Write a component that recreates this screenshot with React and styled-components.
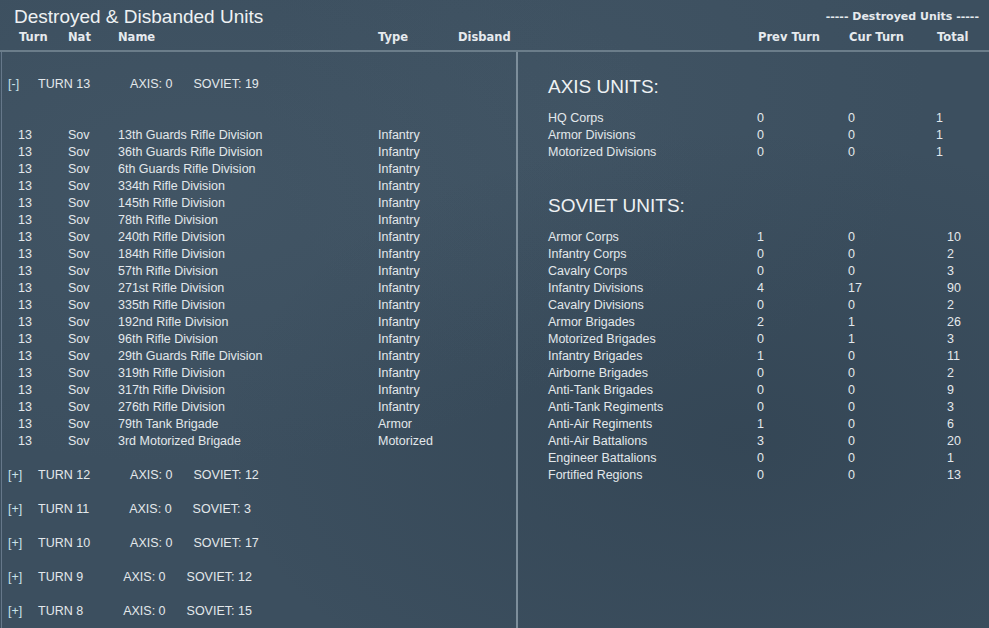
import React from "react";
import styled, { createGlobalStyle } from "styled-components";

const GlobalStyle = createGlobalStyle`
  html, body {
    margin: 0;
    padding: 0;
    background: #3c4f5f;
    overflow: hidden;
  }
  * { box-sizing: border-box; }
`;

const Page = styled.div`
  width: 989px;
  height: 628px;
  overflow: hidden;
  color: #e3e8eb;
  font-family: "Liberation Sans", Arial, sans-serif;
  background:
    radial-gradient(ellipse at 20% 30%, rgba(90, 110, 125, 0.18), transparent 45%),
    radial-gradient(ellipse at 75% 70%, rgba(30, 45, 58, 0.25), transparent 50%),
    radial-gradient(ellipse at 60% 15%, rgba(85, 105, 120, 0.15), transparent 40%),
    #3c4f5f;
`;

const Header = styled.header`
  display: flex;
  height: 52px;
  border-bottom: 2px solid #6b7d8a;
`;

const HeadLeft = styled.div`
  width: 518px;
  padding-top: 6px;
`;

const HeadRight = styled.div`
  flex: 1;
  padding-top: 10px;
`;

const Title = styled.h1`
  margin: 0 0 0 14px;
  font-size: 19px;
  font-weight: normal;
  line-height: 22px;
  color: #eef1f3;
`;

const ColHeads = styled.div`
  display: grid;
  grid-template-columns: ${(p) => p.cols};
  padding-left: ${(p) => p.indent}px;
  margin-top: ${(p) => p.gap}px;
  font-family: "DejaVu Sans", Verdana, sans-serif;
  font-weight: bold;
  font-size: 11.5px;
  line-height: 14px;
  color: #e6eaee;
  white-space: nowrap;
`;

const Caption = styled.div`
  text-align: right;
  padding-right: 10px;
  font-family: "DejaVu Sans", Verdana, sans-serif;
  font-weight: bold;
  font-size: 11px;
  line-height: 14px;
  color: #e6eaee;
  white-space: pre;
`;

const Body = styled.div`
  display: flex;
  height: 576px;
`;

const LeftPanel = styled.section`
  width: 517px;
  margin-left: 1px;
  border-left: 1px solid #66788a;
  border-right: 2px solid #7d8e9b;
  padding-top: 15px;
`;

const RightPanel = styled.section`
  flex: 1;
  padding: 20px 0 0 30px;
`;

const TurnHeader = styled.div`
  display: flex;
  height: 34px;
  line-height: 34px;
  font-size: 12.5px;
  white-space: nowrap;
`;

const Toggle = styled.span`
  width: 36px;
  padding-left: 6px;
  color: #c9e3ea;
`;

const TurnLabel = styled.span`
  margin-right: 40px;
`;

const Count = styled.span`
  margin-right: 21px;
`;

const UnitList = styled.div`
  margin: 26px 0 8px;
`;

const UnitRow = styled.div`
  display: grid;
  grid-template-columns: 50px 50px 260px 1fr;
  padding-left: 16px;
  height: 17px;
  line-height: 17px;
  font-size: 12.5px;
  white-space: nowrap;
`;

const SectionTitle = styled.h2`
  margin: ${(p) => (p.first ? "0" : "30px")} 0 8px 0;
  height: 30px;
  line-height: 30px;
  font-size: 19px;
  font-weight: normal;
  color: #eef1f3;
`;

const StatRow = styled.div`
  display: grid;
  grid-template-columns: 209px 91px ${(p) => 88 + p.shift}px 1fr;
  height: 17px;
  line-height: 17px;
  font-size: 12.5px;
  white-space: nowrap;
`;

const turns = [
  { n: 12, soviet: 12 },
  { n: 11, soviet: 3 },
  { n: 10, soviet: 17 },
  { n: 9, soviet: 12 },
  { n: 8, soviet: 15 },
];

const units = [
  ["13th Guards Rifle Division", "Infantry"],
  ["36th Guards Rifle Division", "Infantry"],
  ["6th Guards Rifle Division", "Infantry"],
  ["334th Rifle Division", "Infantry"],
  ["145th Rifle Division", "Infantry"],
  ["78th Rifle Division", "Infantry"],
  ["240th Rifle Division", "Infantry"],
  ["184th Rifle Division", "Infantry"],
  ["57th Rifle Division", "Infantry"],
  ["271st Rifle Division", "Infantry"],
  ["335th Rifle Division", "Infantry"],
  ["192nd Rifle Division", "Infantry"],
  ["96th Rifle Division", "Infantry"],
  ["29th Guards Rifle Division", "Infantry"],
  ["319th Rifle Division", "Infantry"],
  ["317th Rifle Division", "Infantry"],
  ["276th Rifle Division", "Infantry"],
  ["79th Tank Brigade", "Armor"],
  ["3rd Motorized Brigade", "Motorized"],
];

const axisStats = [
  ["HQ Corps", 0, 0, 1],
  ["Armor Divisions", 0, 0, 1],
  ["Motorized Divisions", 0, 0, 1],
];

const sovietStats = [
  ["Armor Corps", 1, 0, 10],
  ["Infantry Corps", 0, 0, 2],
  ["Cavalry Corps", 0, 0, 3],
  ["Infantry Divisions", 4, 17, 90],
  ["Cavalry Divisions", 0, 0, 2],
  ["Armor Brigades", 2, 1, 26],
  ["Motorized Brigades", 0, 1, 3],
  ["Infantry Brigades", 1, 0, 11],
  ["Airborne Brigades", 0, 0, 2],
  ["Anti-Tank Brigades", 0, 0, 9],
  ["Anti-Tank Regiments", 0, 0, 3],
  ["Anti-Air Regiments", 1, 0, 6],
  ["Anti-Air Battalions", 3, 0, 20],
  ["Engineer Battalions", 0, 0, 1],
  ["Fortified Regions", 0, 0, 13],
];

const Turn = ({ open, n, axis, soviet }) => (
  <TurnHeader>
    <Toggle>{open ? "[-]" : "[+]"}</Toggle>
    <TurnLabel>TURN {n}</TurnLabel>
    <Count>AXIS: {axis}</Count>
    <Count>SOVIET: {soviet}</Count>
  </TurnHeader>
);

const Stats = ({ rows, shift }) =>
  rows.map(([label, prev, cur, total]) => (
    <StatRow key={label} shift={shift}>
      <span>{label}</span>
      <span>{prev}</span>
      <span>{cur}</span>
      <span>{total}</span>
    </StatRow>
  ));

export default function App() {
  return (
    <Page>
      <GlobalStyle />
      <Header>
        <HeadLeft>
          <Title>Destroyed &amp; Disbanded Units</Title>
          <ColHeads cols="49px 50px 260px 80px 1fr" indent={19} gap={2}>
            <span>Turn</span>
            <span>Nat</span>
            <span>Name</span>
            <span>Type</span>
            <span>Disband</span>
          </ColHeads>
        </HeadLeft>
        <HeadRight>
          <Caption>----- Destroyed Units -----</Caption>
          <ColHeads cols="91px 88px 1fr" indent={240} gap={6}>
            <span>Prev Turn</span>
            <span>Cur Turn</span>
            <span>Total</span>
          </ColHeads>
        </HeadRight>
      </Header>
      <Body>
        <LeftPanel>
          <Turn open n={13} axis={0} soviet={19} />
          <UnitList>
            {units.map(([name, type]) => (
              <UnitRow key={name}>
                <span>13</span>
                <span>Sov</span>
                <span>{name}</span>
                <span>{type}</span>
              </UnitRow>
            ))}
          </UnitList>
          {turns.map((t) => (
            <Turn key={t.n} n={t.n} axis={0} soviet={t.soviet} />
          ))}
        </LeftPanel>
        <RightPanel>
          <SectionTitle first>AXIS UNITS:</SectionTitle>
          <Stats rows={axisStats} shift={0} />
          <SectionTitle>SOVIET UNITS:</SectionTitle>
          <Stats rows={sovietStats} shift={11} />
        </RightPanel>
      </Body>
    </Page>
  );
}
